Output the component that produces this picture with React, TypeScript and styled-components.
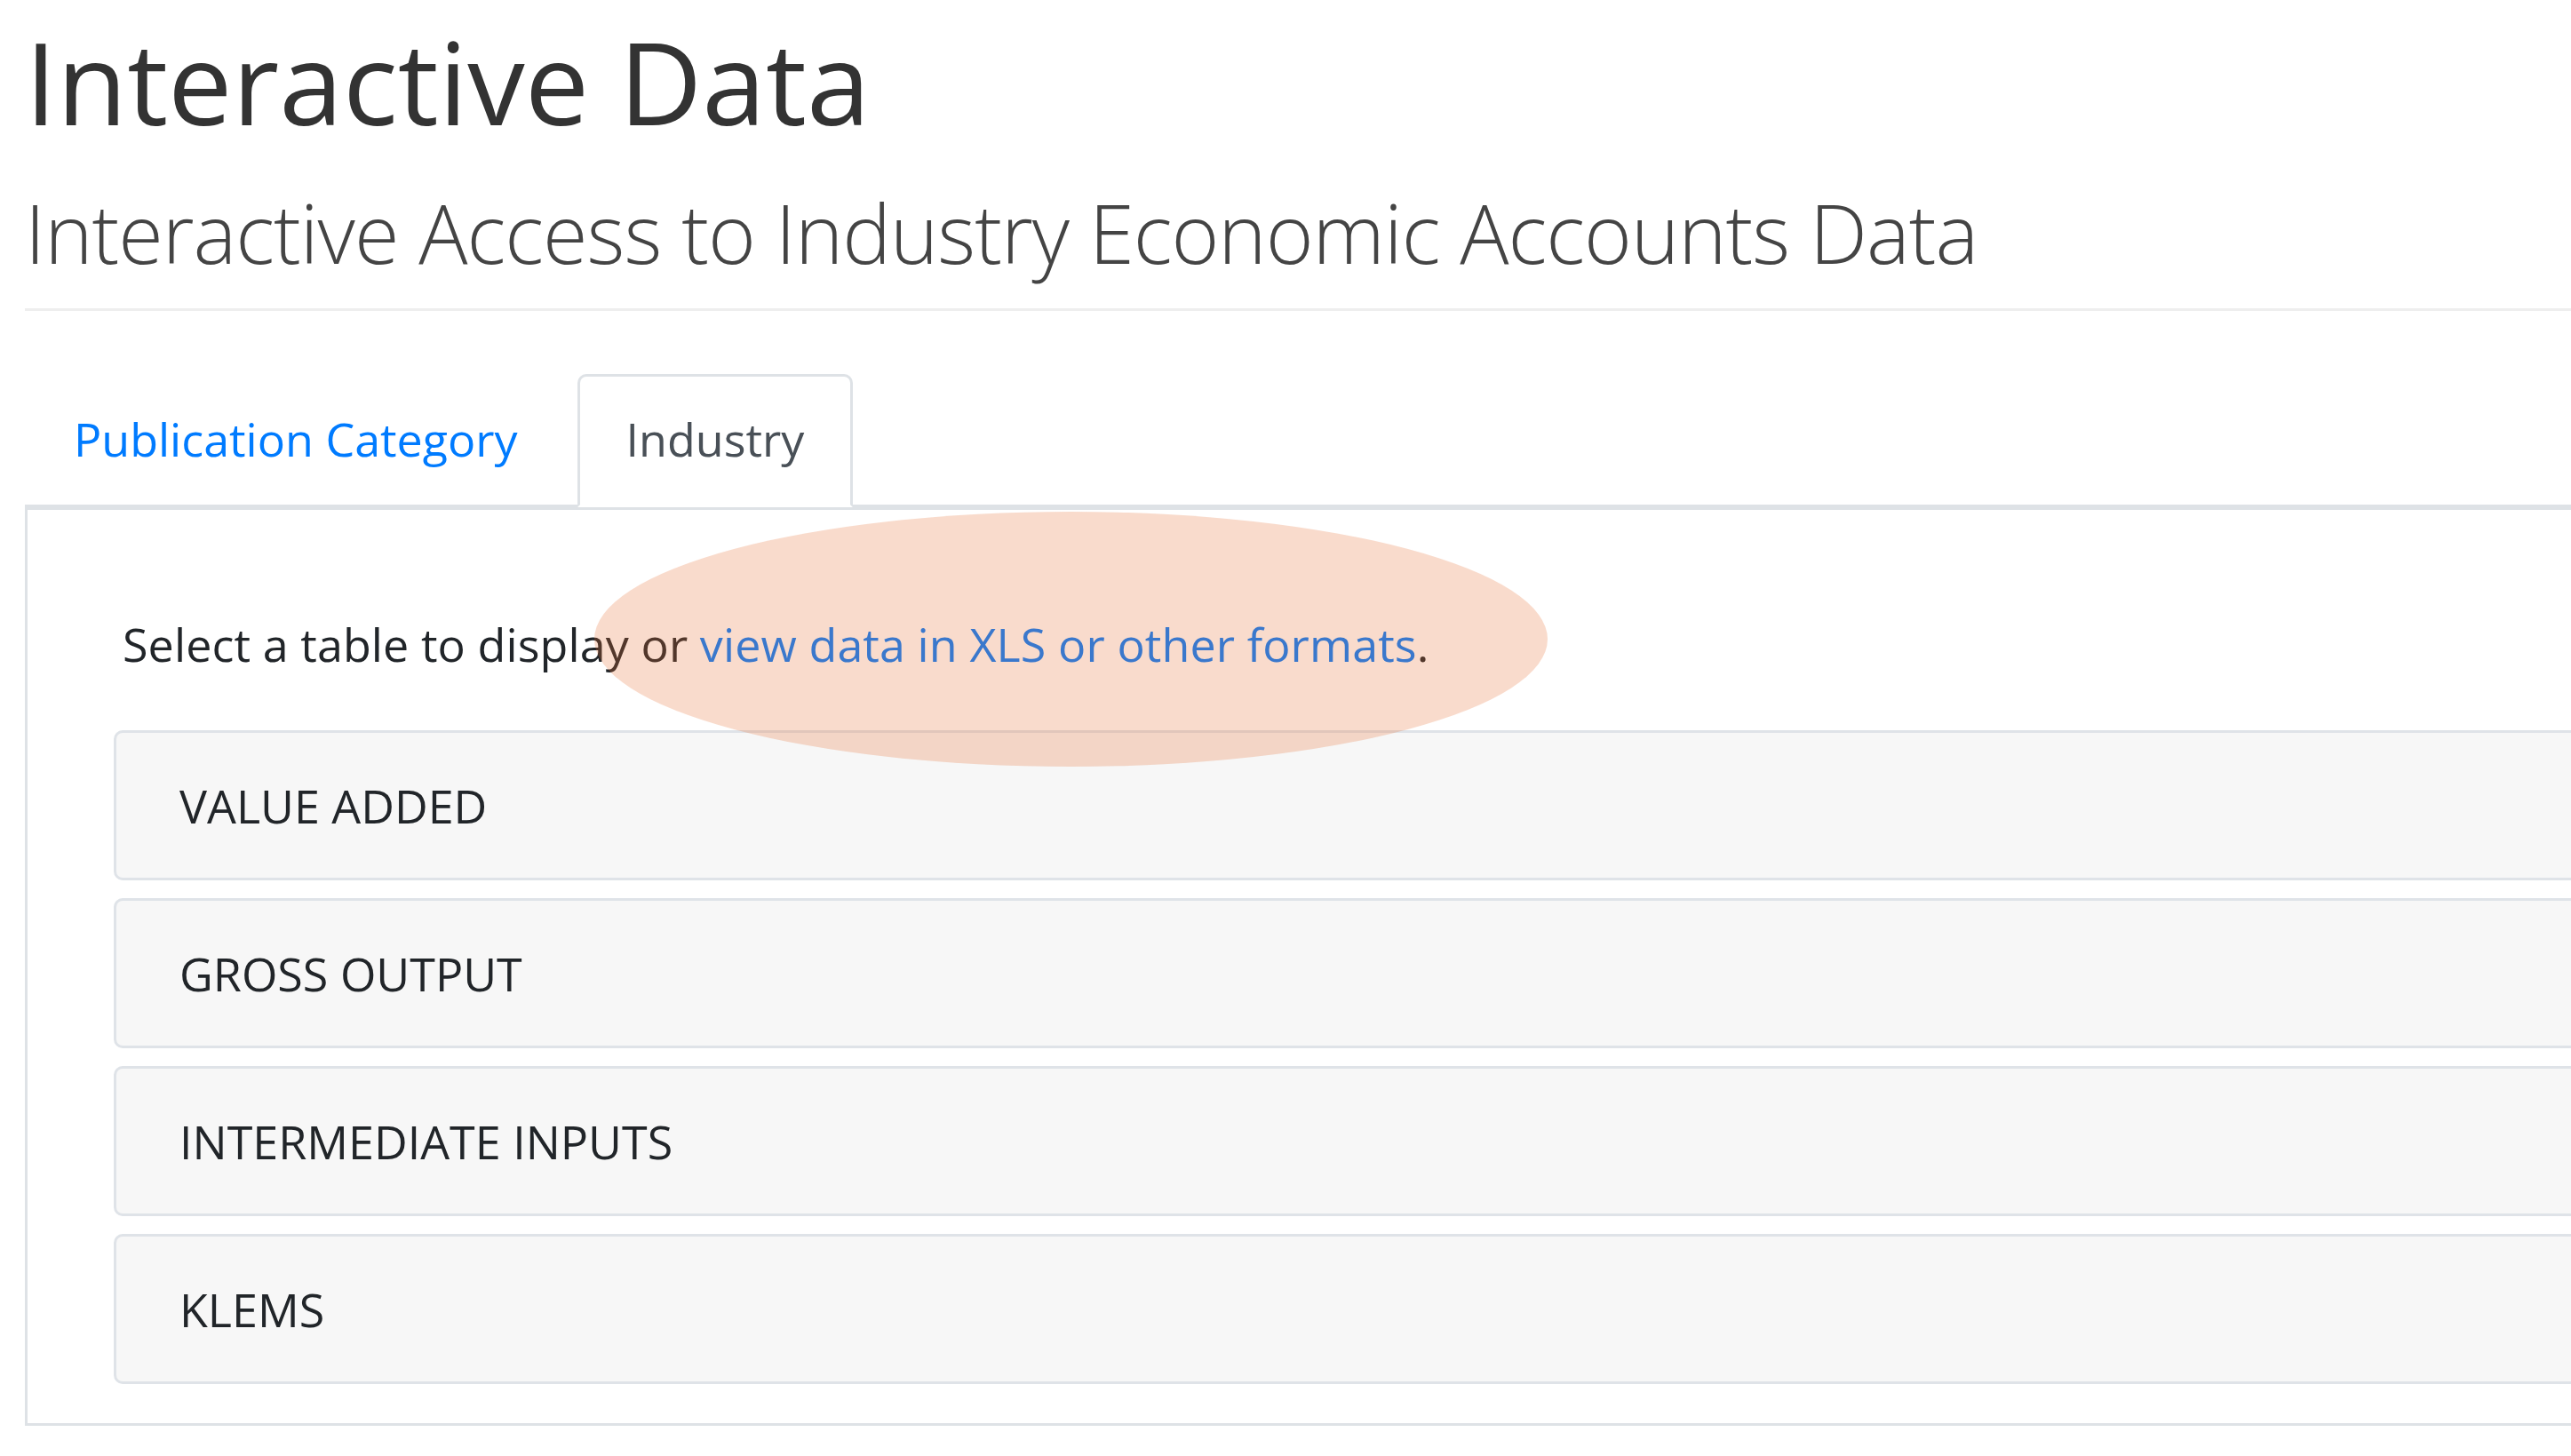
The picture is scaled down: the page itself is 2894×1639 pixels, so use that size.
import React, { useState } from 'react';
import styled, { createGlobalStyle } from 'styled-components';

const GlobalStyle = createGlobalStyle`
  html, body {
    margin: 0;
    padding: 0;
    background: #fff;
    overflow: hidden;
  }
  body {
    font-family: "Open Sans", "Noto Sans", sans-serif;
    color: #212529;
  }
`;

const Page = styled.div`
  position: relative;
  width: 3200px;
  padding: 15px 0 0 28px;
`;

const Title = styled.h1`
  margin: 0;
  font-size: 129px;
  font-weight: 400;
  line-height: 152px;
  color: #333;
`;

const Subtitle = styled.h2`
  margin: 40px 0 0;
  font-size: 92px;
  font-weight: 300;
  line-height: 110px;
  letter-spacing: -1px;
  color: #444;
`;

const Rule = styled.hr`
  margin: 30px 0 0;
  border: 0;
  border-top: 3px solid #eee;
`;

const TabList = styled.nav`
  display: flex;
  gap: 12px;
  margin-top: 71px;
  border-bottom: 3px solid #dee2e6;
`;

const Tab = styled.button<{ $active?: boolean }>`
  margin-bottom: -3px;
  padding: 31px 52px 35px;
  font-family: inherit;
  font-size: 52px;
  line-height: 78px;
  background: ${(p) => (p.$active ? '#fff' : 'transparent')};
  color: ${(p) => (p.$active ? '#495057' : '#007bff')};
  border: 3px solid transparent;
  border-color: ${(p) => (p.$active ? '#dee2e6 #dee2e6 #fff' : 'transparent')};
  border-radius: 10px 10px 0 0;
  cursor: pointer;
`;

const Panel = styled.section`
  border: 3px solid #dee2e6;
  padding: 112px 97px 44px;
`;

const Intro = styled.p`
  margin: 0 0 58px;
  padding-left: 10px;
  font-size: 52px;
  line-height: 78px;
  letter-spacing: 0.1px;

  a {
    color: #007bff;
    text-decoration: none;
  }
`;

const ItemList = styled.div`
  display: flex;
  flex-direction: column;
  gap: 20px;
`;

const Item = styled.div`
  padding: 43px 71px 42px;
  background: #f7f7f7;
  border: 3px solid #dfe3e8;
  border-radius: 10px;
  font-size: 52px;
  line-height: 78px;
  color: #212529;
  cursor: pointer;
`;

// annotation ring drawn over the link
const Highlight = styled.div`
  position: absolute;
  left: 669px;
  top: 576px;
  width: 1073px;
  height: 287px;
  border-radius: 50%;
  background: rgba(230, 110, 50, 0.25);
  pointer-events: none;
`;

const tables = ['VALUE ADDED', 'GROSS OUTPUT', 'INTERMEDIATE INPUTS', 'KLEMS'];

export default function App() {
  const [tab, setTab] = useState('industry');

  return (
    <>
      <GlobalStyle />
      <Page>
        <Title>Interactive Data</Title>
        <Subtitle>Interactive Access to Industry Economic Accounts Data</Subtitle>
        <Rule />
        <TabList>
          <Tab $active={tab === 'publication'} onClick={() => setTab('publication')}>
            Publication Category
          </Tab>
          <Tab $active={tab === 'industry'} onClick={() => setTab('industry')}>
            Industry
          </Tab>
        </TabList>
        <Panel>
          <Intro>
            Select a table to display or <a href="#">view data in XLS or other formats</a>.
          </Intro>
          <ItemList>
            {tables.map((t) => (
              <Item key={t}>{t}</Item>
            ))}
          </ItemList>
        </Panel>
        <Highlight />
      </Page>
    </>
  );
}
